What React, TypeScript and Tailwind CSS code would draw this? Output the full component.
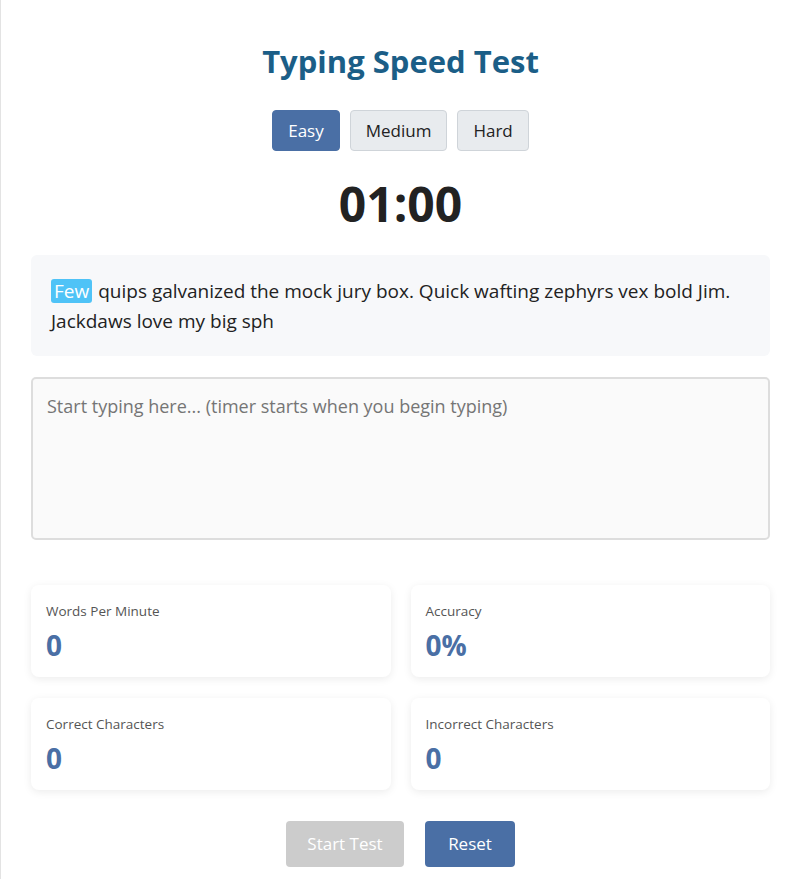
import { useState } from "react";

const PASSAGE =
  "Few quips galvanized the mock jury box. Quick wafting zephyrs vex bold Jim. Jackdaws love my big sph";

const LEVELS = ["Easy", "Medium", "Hard"];

const STATS = [
  { label: "Words Per Minute", value: "0" },
  { label: "Accuracy", value: "0%" },
  { label: "Correct Characters", value: "0" },
  { label: "Incorrect Characters", value: "0" },
];

const App = () => {
  const [level, setLevel] = useState("Easy");
  const [typed, setTyped] = useState("");

  const first = PASSAGE.split(" ")[0];
  const rest = PASSAGE.slice(first.length + 1);

  return (
    <div className="min-h-screen bg-white border-l border-[#e3e3e3] pl-[30px] font-['Open_Sans',sans-serif] text-[#222]">
      <div className="w-[739px] pt-[40px] pb-3 flex flex-col items-center">
        <h1 className="text-[31px] font-bold text-[#1b5e87] leading-[42px]">
          Typing Speed Test
        </h1>

        {/* Difficulty */}
        <div className="flex gap-[10px] mt-[28px]">
          {LEVELS.map((l) => (
            <button
              key={l}
              onClick={() => setLevel(l)}
              className={
                l === level
                  ? "h-[41px] px-[15px] rounded-[4px] text-[17px] bg-[#4a6fa5] text-white border border-[#4a6fa5]"
                  : "h-[41px] px-[15px] rounded-[4px] text-[17px] bg-[#e8ebee] text-[#222] border border-[#cfd4d9]"
              }
            >
              {l}
            </button>
          ))}
        </div>

        {/* Timer */}
        <div className="mt-[25px] text-[48px] font-bold leading-[56px] text-[#222]">
          01:00
        </div>

        {/* Passage */}
        <div className="mt-[23px] w-full bg-[#f7f8fa] rounded-[6px] px-5 pt-[21px] pb-[20px] text-[19px] leading-[30px] text-[#222]">
          <span className="inline-block bg-[#4fc3f7] text-white rounded-[3px] px-[3px] leading-[24px] mr-[6px]">
            {first}
          </span>
          <span>{rest}</span>
        </div>

        {/* Input */}
        <textarea
          value={typed}
          onChange={(e) => setTyped(e.target.value)}
          placeholder="Start typing here... (timer starts when you begin typing)"
          className="mt-[21px] w-full h-[163px] resize-none bg-[#fafafa] border-2 border-[#dddddd] rounded-[5px] px-[14px] py-[14px] text-[18px] leading-[26px] placeholder:text-[#757575] outline-none"
        />

        {/* Stats */}
        <div className="mt-[45px] w-full grid grid-cols-2 gap-x-[20px] gap-y-[21px]">
          {STATS.map((s) => (
            <div
              key={s.label}
              className="bg-white rounded-[8px] shadow-[0_2px_8px_rgba(0,0,0,0.08)] px-[15px] pt-[16px] pb-[12px] h-[92px]"
            >
              <p className="text-[13.5px] text-[#555] leading-[20px]">{s.label}</p>
              <p className="mt-[6px] text-[28px] font-bold text-[#4a6fa5] leading-[36px]">
                {s.value}
              </p>
            </div>
          ))}
        </div>

        {/* Controls */}
        <div className="mt-[31px] flex gap-[21px]">
          <button
            disabled
            className="h-[46px] w-[118px] rounded-[4px] bg-[#cccccc] text-white text-[17px]"
          >
            Start Test
          </button>
          <button
            onClick={() => setTyped("")}
            className="h-[46px] w-[90px] rounded-[4px] bg-[#4a6fa5] text-white text-[17px]"
          >
            Reset
          </button>
        </div>
      </div>
    </div>
  );
};

export default App;
